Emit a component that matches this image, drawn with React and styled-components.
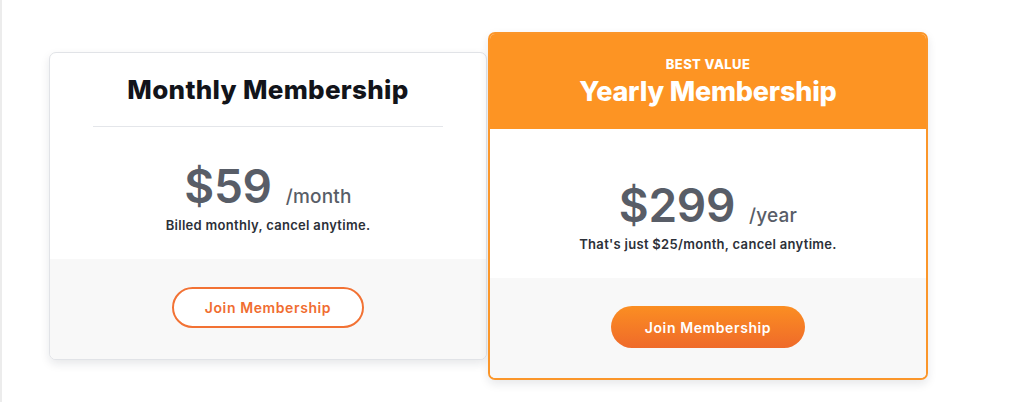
import styled, { createGlobalStyle } from 'styled-components'

const GlobalStyle = createGlobalStyle`
    * { box-sizing: border-box; }
    body {
        margin: 0;
        background: #ffffff;
        font-family: Inter, "Liberation Sans", sans-serif;
    }
`

const Page = styled.div`
    height: 402px;
    border-left: 2px solid #ececec;
    display: flex;
    align-items: center;
    padding: 0 0 0 47px;
`

const Row = styled.div`
    display: flex;
    align-items: center;
    gap: 1px;
    margin-top: 10px;
`

const Card = styled.div`
    width: ${p => p.$wide ? '440px' : '438px'};
    background: #ffffff;
    border: ${p => p.$featured ? '2px solid #fb962a' : '1px solid #e1e3e7'};
    border-radius: 7px;
    box-shadow: 0 4px 10px rgba(20, 30, 50, 0.10);
    overflow: hidden;
    display: flex;
    flex-direction: column;
`

const PlainHeader = styled.div`
    padding: 22px 43px 0;
    text-align: center;
`

const FeaturedHeader = styled.div`
    background: #fd9423;
    height: 97px;
    margin: -2px -2px 0;
    display: flex;
    flex-direction: column;
    align-items: center;
    padding-top: 24px;
    color: #ffffff;
`

const Tag = styled.div`
    font-size: 13px;
    font-weight: 800;
    letter-spacing: 0.4px;
    line-height: 16px;
`

const Title = styled.h2`
    margin: ${p => p.$light ? '3px 0 0' : '0'};
    font-size: ${p => p.$light ? '27px' : '26px'};
    font-weight: 800;
    letter-spacing: ${p => p.$light ? '-0.2px' : '0.3px'};
    line-height: ${p => p.$light ? '34px' : '30px'};
    color: ${p => p.$light ? '#ffffff' : '#12141a'};
`

const Divider = styled.hr`
    border: none;
    border-top: 1px solid #e4e6ea;
    margin: 21px 0 0;
`

const Body = styled.div`
    display: flex;
    flex-direction: column;
    align-items: center;
    padding: ${p => p.$featured ? '50px 0 26px' : '33px 0 26px'};
`

const PriceLine = styled.div`
    display: flex;
    align-items: baseline;
    gap: 14px;
    color: #585d67;
`

const Amount = styled.span`
    font-size: 46px;
    font-weight: 600;
    letter-spacing: -0.3px;
    line-height: 52px;
`

const Period = styled.span`
    font-size: 19px;
    font-weight: 500;
    letter-spacing: 0.2px;
`

const Note = styled.p`
    margin: 5px 0 0;
    font-size: 13px;
    font-weight: 600;
    letter-spacing: 0.3px;
    color: #2c3038;
`

const Footer = styled.div`
    background: #f8f8f8;
    display: flex;
    justify-content: center;
    padding: ${p => p.$featured ? '28px 0 30px' : '28px 0 31px'};
`

const JoinButton = styled.button`
    width: ${p => p.$solid ? '194px' : '192px'};
    height: ${p => p.$solid ? '42px' : '41px'};
    border-radius: 21px;
    font-family: inherit;
    font-size: 14px;
    font-weight: 600;
    letter-spacing: 0.6px;
    cursor: pointer;
    color: ${p => p.$solid ? '#ffffff' : '#f06d30'};
    background: ${p => p.$solid ? 'linear-gradient(180deg, #fb8e22 0%, #ef6a2a 100%)' : '#ffffff'};
    border: ${p => p.$solid ? 'none' : '2px solid #f27234'};
`

const App = () => {
    return (
        <>
            <GlobalStyle />
            <Page>
                <Row>
                    <Card>
                        <PlainHeader>
                            <Title>Monthly Membership</Title>
                            <Divider />
                        </PlainHeader>
                        <Body>
                            <PriceLine>
                                <Amount>$59</Amount>
                                <Period>/month</Period>
                            </PriceLine>
                            <Note>Billed monthly, cancel anytime.</Note>
                        </Body>
                        <Footer>
                            <JoinButton>Join Membership</JoinButton>
                        </Footer>
                    </Card>
                    <Card $featured $wide>
                        <FeaturedHeader>
                            <Tag>BEST VALUE</Tag>
                            <Title $light>Yearly Membership</Title>
                        </FeaturedHeader>
                        <Body $featured>
                            <PriceLine>
                                <Amount>$299</Amount>
                                <Period>/year</Period>
                            </PriceLine>
                            <Note>That's just $25/month, cancel anytime.</Note>
                        </Body>
                        <Footer $featured>
                            <JoinButton $solid>Join Membership</JoinButton>
                        </Footer>
                    </Card>
                </Row>
            </Page>
        </>
    )
}

export default App
